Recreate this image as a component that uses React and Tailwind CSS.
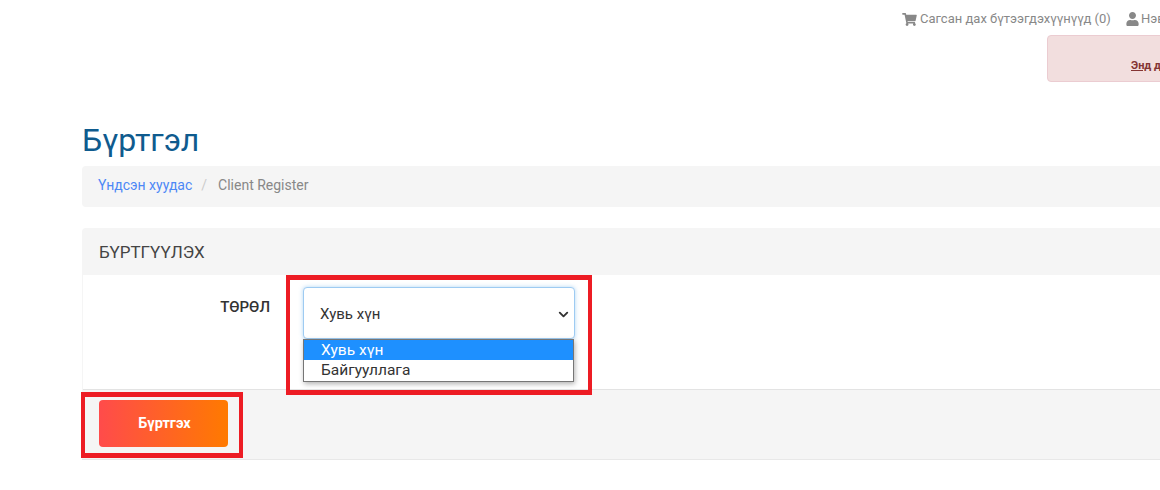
import React from "react";
import { FaShoppingCart, FaUser } from "react-icons/fa";
import { ChevronDown } from "lucide-react";

export default function App() {
  return (
    <div className="relative w-[1160px] h-[490px] overflow-hidden bg-white font-['Roboto',sans-serif] text-[#333]">
      <div className="w-[1300px] pl-[82px]">
        <div className="h-[35px] flex items-center pl-[820px] pt-[3px] text-[13px] text-[#888] whitespace-nowrap">
          <FaShoppingCart className="w-[15px] h-[13px] mr-[3px]" />
          <span>Сагсан дах бүтээгдэхүүнүүд (0)</span>
          <FaUser className="w-[13px] h-[14px] ml-[15px] mr-[2px]" />
          <span>Нэвтрэх</span>
        </div>
        <div className="ml-[965px] w-[250px] h-[47px] bg-[#f2dede] border border-[#ebccd1] rounded flex items-end pl-[83px] pb-[7px] text-[11px] font-bold text-[#843534] whitespace-nowrap">
          <span><span className="underline">Энд</span> дарж</span>
        </div>
        <h1 className="mt-[26px] h-[58px] pt-[13px] text-[32px] leading-[38px] font-normal text-[#0f5b8e]">Бүртгэл</h1>
        <div className="h-[41px] bg-[#f5f5f5] rounded flex items-center pl-4 pb-[2px] text-[14px]">
          <span className="text-[#4d88f5]">Үндсэн хуудас</span>
          <span className="text-[#ccc] ml-[9px] mr-[11px]">/</span>
          <span className="text-[#888]">Client Register</span>
        </div>
        <div className="mt-[21px] bg-[#f5f5f5] rounded-t border-b border-[#e8e8e8] h-[232px] flex flex-col">
          <div className="h-[47px] shrink-0 flex items-center pl-[17px] pt-[2px] text-[17px] text-[#444]">БҮРТГҮҮЛЭХ</div>
          <div className="ml-px h-[115px] shrink-0 bg-white border-b border-[#e3e3e3] flex">
            <div className="w-[187px] pt-[23px] text-right text-[15px] leading-[18px] font-medium text-[#333]">ТӨРӨЛ</div>
            <div className="ml-[33px] pt-[12px] w-[272px]">
              <div className="h-[52px] bg-white border border-[#9ecbf2] rounded shadow-[0_0_4px_rgba(102,175,233,0.5)] flex items-center justify-between pl-[16px] pr-[3px] pt-[2px] text-[15px] text-[#333]">
                <span>Хувь хүн</span>
                <ChevronDown className="w-[15px] h-[15px]" strokeWidth={3} />
              </div>
              <div className="w-[271px] border border-[#767676] shadow-[1px_2px_5px_rgba(0,0,0,0.3)] bg-white text-[15.5px] leading-[20px]">
                <div className="h-[20px] bg-[#1e90ff] text-white pl-[17px]">Хувь хүн</div>
                <div className="h-[21px] text-[#333] pl-[17px]">Байгууллага</div>
              </div>
            </div>
          </div>
          <div className="pl-[17px] pt-[10px]">
            <button className="w-[129px] h-[47px] rounded bg-linear-to-r/srgb from-[#ff4b4b] to-[#ff7a00] pl-[2px] text-white text-[14.5px] font-bold">Бүртгэх</button>
          </div>
        </div>
      </div>
      <div className="absolute left-[286px] top-[275px] w-[306px] h-[120px] border-x-4 border-y-[5px] border-[#ed1c24]" />
      <div className="absolute left-[81px] top-[392px] w-[162px] h-[66px] border-x-4 border-y-[5px] border-[#ed1c24]" />
    </div>
  );
}
